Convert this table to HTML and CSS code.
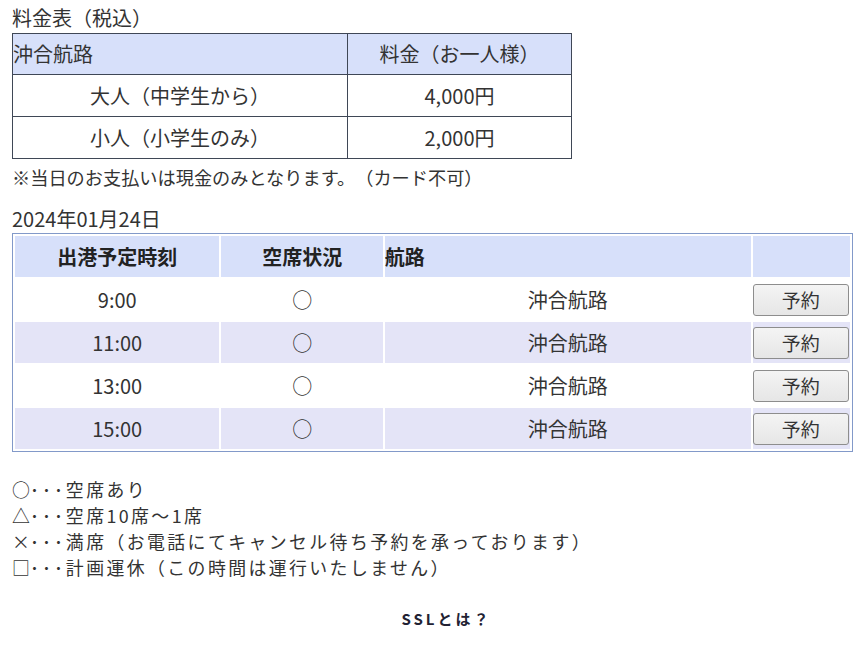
FILE: index.html
```html
<!DOCTYPE html>
<html lang="ja">
<head>
<meta charset="utf-8">
<title>料金表</title>
<link rel="stylesheet" href="styles.css">
</head>
<body>
<div class="page">
  <h2 class="title">料金表（税込）</h2>
  <table class="fare">
    <thead>
      <tr><th class="left">沖合航路</th><th>料金（お一人様）</th></tr>
    </thead>
    <tbody>
      <tr><td>大人（中学生から）</td><td>4,000円</td></tr>
      <tr><td>小人（小学生のみ）</td><td>2,000円</td></tr>
    </tbody>
  </table>
  <p class="note">※当日のお支払いは現金のみとなります。（カード不可）</p>

  <p class="date">2024年01月24日</p>
  <table class="sched">
    <thead>
      <tr><th class="c1">出港予定時刻</th><th class="c2">空席状況</th><th class="c3 left">航路</th><th class="c4"></th></tr>
    </thead>
    <tbody>
      <tr><td>9:00</td><td>○</td><td>沖合航路</td><td><button class="btn">予約</button></td></tr>
      <tr class="alt"><td>11:00</td><td>○</td><td>沖合航路</td><td><button class="btn">予約</button></td></tr>
      <tr><td>13:00</td><td>○</td><td>沖合航路</td><td><button class="btn">予約</button></td></tr>
      <tr class="alt"><td>15:00</td><td>○</td><td>沖合航路</td><td><button class="btn">予約</button></td></tr>
    </tbody>
  </table>

  <ul class="legend">
    <li><span class="sym">○</span><span class="dots">･･･</span><span class="desc">空席あり</span></li>
    <li><span class="sym">△</span><span class="dots">･･･</span><span class="desc">空席10席～1席</span></li>
    <li><span class="sym">×</span><span class="dots">･･･</span><span class="desc">満席（お電話にてキャンセル待ち予約を承っております）</span></li>
    <li><span class="sym">□</span><span class="dots">･･･</span><span class="desc">計画運休（この時間は運行いたしません）</span></li>
  </ul>

  <p class="ssl">SSLとは？</p>
</div>
</body>
</html>
```

FILE: styles.css
```css
html, body {
  margin: 0;
  padding: 0;
  background: #ffffff;
}
body {
  font-family: "Noto Sans CJK JP", "Noto Sans", sans-serif;
  font-size: 20px;
  color: #333333;
  text-spacing-trim: space-all;
}
.page {
  padding: 6px 12px 0 12px;
  width: 841px;
}
.title {
  margin: 0;
  font-size: 20px;
  font-weight: normal;
  line-height: 24px;
  height: 27px;
}
.fare {
  border-collapse: collapse;
  width: 560px;
}
.fare th, .fare td {
  border: 1px solid #3f4756;
  font-weight: normal;
  text-align: center;
  padding: 0;
  line-height: 24px;
}
.fare th {
  background: #d7e0fa;
  height: 40px;
}
.fare td {
  height: 41px;
}
.fare th:first-child, .fare td:first-child {
  width: 334px;
}
.left {
  text-align: left !important;
}
.note {
  margin: 0;
  font-size: 18.2px;
  height: 28px;
  line-height: 36px;
}
.date {
  margin: 0;
  padding-top: 20px;
  line-height: 24px;
  height: 26px;
}
.sched {
  width: 841px;
  border: 1px solid #8299c9;
  border-spacing: 2px;
  margin-top: 0;
}
.sched th, .sched td {
  padding: 0;
  height: 41px;
  text-align: center;
  line-height: 24px;
}
.sched th {
  background: #d7e0fa;
  font-weight: bold;
  color: #222222;
}
.sched tr.alt td {
  background: #e4e4f7;
}
.sched .c1 { width: 204px; }
.sched .c2 { width: 161px; }
.sched .c3 { width: 365px; }
.sched .c4 { width: 97px; }
.sched td:last-child {
  text-align: left;
}
.btn {
  width: 96px;
  height: 32px;
  margin: 0;
  font-family: "Noto Sans CJK JP", sans-serif;
  font-size: 19px;
  color: #333333;
  background: linear-gradient(#f4f4f4, #e6e6e6);
  border: 1px solid #8d8d8d;
  border-radius: 3px;
  padding: 0;
  line-height: 28px;
  vertical-align: middle;
}
.legend {
  list-style: none;
  margin: 0;
  padding: 24px 0 0 0;
  font-size: 17.9px;
  letter-spacing: 2.4px;
}
.legend li {
  display: flex;
  height: 26px;
  line-height: 26px;
}
.legend li span {
  display: block;
}
.sym {
  letter-spacing: 0;
  width: 18px;
}
.dots {
  letter-spacing: 3px;
}
.ssl {
  margin: 0;
  padding: 28px 0 0 28px;
  text-align: center;
  font-size: 15px;
  font-weight: bold;
  color: #222233;
  letter-spacing: 3px;
}
```
